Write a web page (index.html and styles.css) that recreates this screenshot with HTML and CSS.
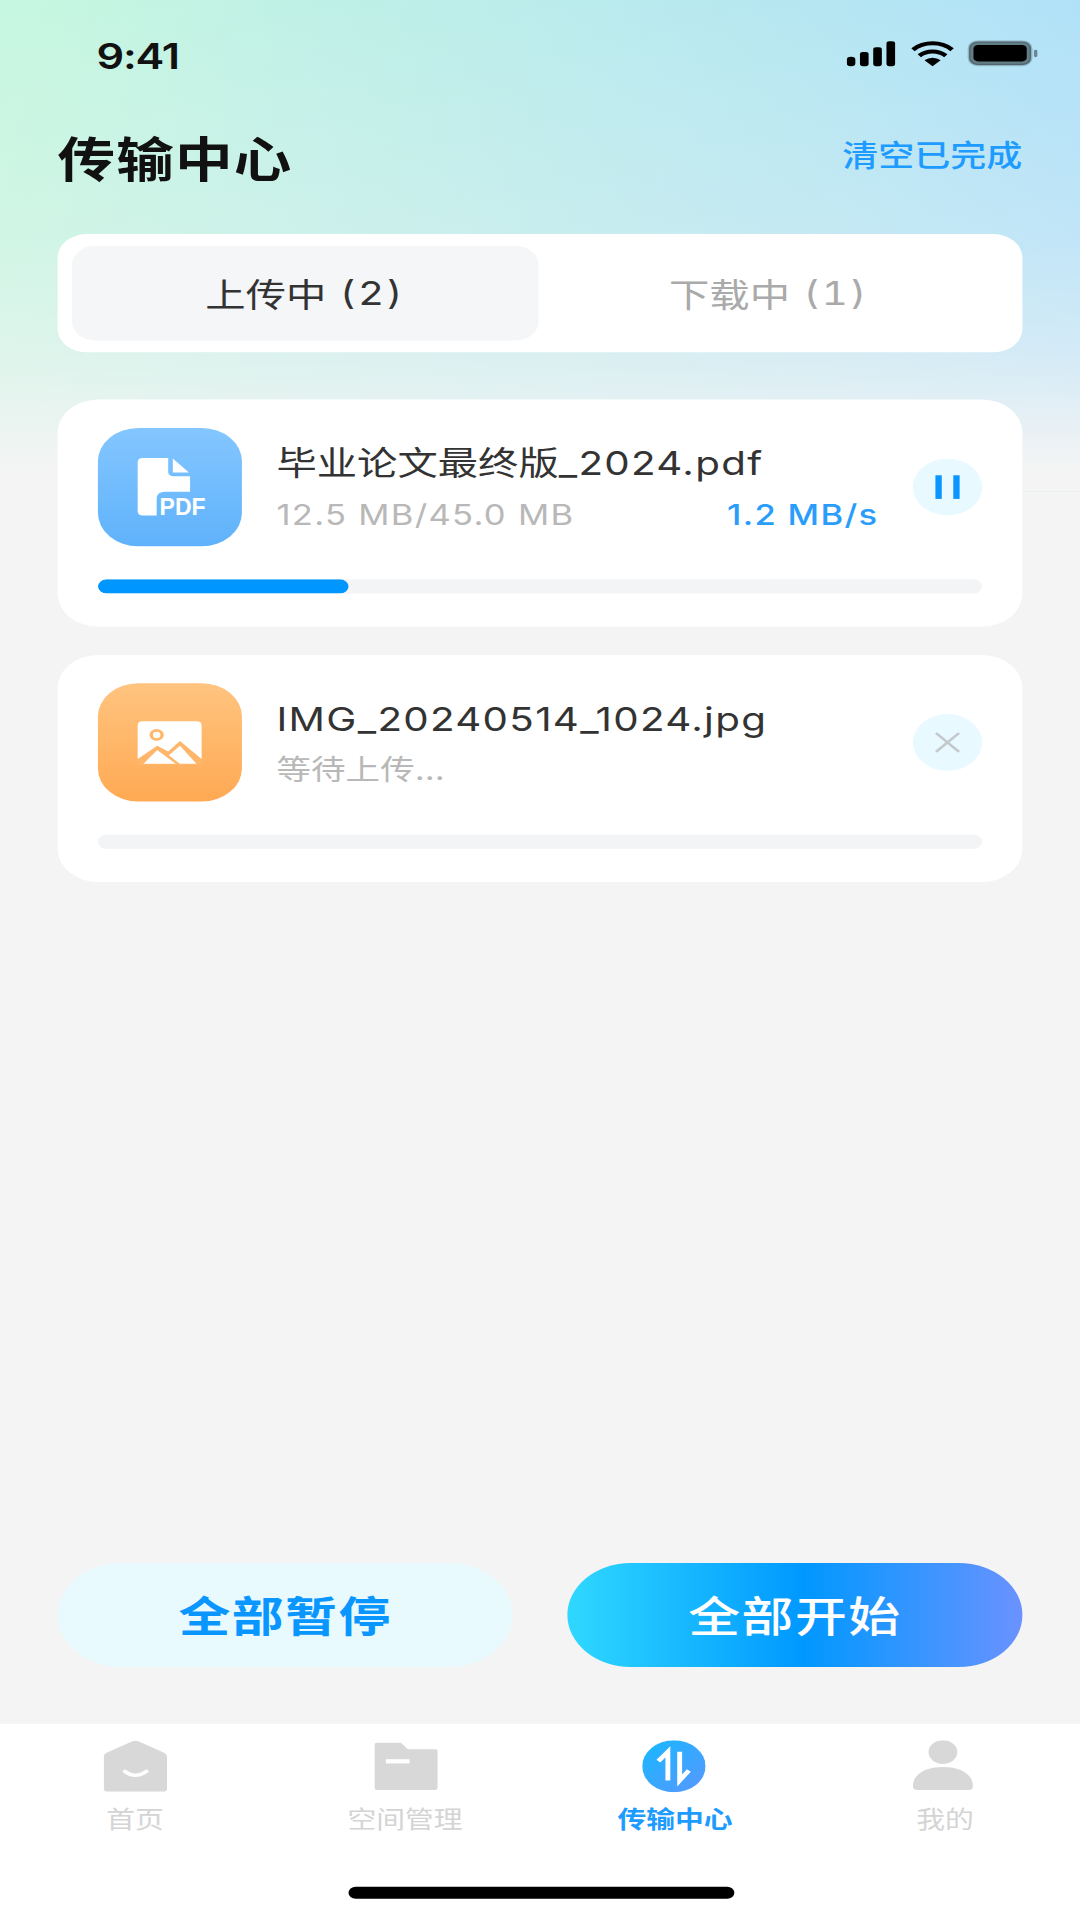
FILE: index.html
```html
<!DOCTYPE html>
<html lang="zh-CN">
<head>
  <meta charset="UTF-8">
  <meta name="viewport" content="width=device-width, initial-scale=1.0">
  <title>传输中心</title>
  <link rel="stylesheet" href="styles.css">
</head>
<body>
<div class="screen">
  <div class="status-bar">
    <span class="clock">9:41</span>
    <svg class="status-icons" width="68" height="12" viewBox="0 0 68 12">
      <rect x="0" y="7" width="3" height="4" rx="1.4"/>
      <rect x="4.6" y="5" width="3" height="6" rx="1"/>
      <rect x="9.2" y="3" width="3" height="8" rx="1"/>
      <rect x="13.8" y="0.4" width="3" height="10.6" rx="1"/>
      <path class="wifi" d="M23 4a10 10 0 0 1 13.600 0M25.200 6.600a6.800 6.800 0 0 1 9.200 0"/>
      <path d="M29.800 11 27 8.500a4.200 4.200 0 0 1 5.600 0z"/>
      <rect class="batt-edge" x="42.5" y="0.5" width="21.500" height="10" rx="3"/>
      <rect x="44" y="2" width="18.500" height="7" rx="1.6"/>
      <rect class="batt-cap" x="65" y="4" width="1.2" height="3.2" rx="0.6"/>
    </svg>
  </div>

  <header class="top">
    <h1>传输中心</h1>
    <a class="clear-link">清空已完成</a>
  </header>

  <div class="tabs">
    <div class="tab active">上传中<span class="count"> (2)</span></div>
    <div class="tab">下载中<span class="count"> (1)</span></div>
  </div>

  <div class="list">
    <div class="file-card">
      <div class="file-row">
        <svg class="file-icon pdf" width="50" height="50" viewBox="0 0 50 50">
          <path class="glyph" d="M15.6 12.7H24.4V18.4Q24.4 20.4 26.4 20.4H32V27H23.4Q20.4 27 20.4 30V37H15.6Q13.8 37 13.8 35.2V14.5Q13.8 12.7 15.6 12.7Z"/>
          <path class="glyph" d="M26 12.9 31.6 18.8H26Z"/>
          <text class="pdf-label" x="21.4" y="37" textLength="16" lengthAdjust="spacingAndGlyphs">PDF</text>
        </svg>
        <div class="file-info">
          <div class="file-name">毕业论文最终版<span class="latin">_2024.pdf</span></div>
          <div class="file-meta">
            <span class="latin">12.5 MB/45.0 MB</span>
            <span class="latin speed">1.2 MB/s</span>
          </div>
        </div>
        <button class="round-btn" aria-label="暂停">
          <svg width="24" height="24" viewBox="0 0 24 24"><rect class="pause" x="7.8" y="7" width="2.2" height="10"/><rect class="pause" x="14" y="7" width="2.2" height="10"/></svg>
        </button>
      </div>
      <div class="track"><div class="fill" style="width: 28.5%"></div></div>
    </div>

    <div class="file-card">
      <div class="file-row">
        <svg class="file-icon img" width="50" height="50" viewBox="0 0 50 50">
          <path class="glyph" d="M15.6 16H34.2Q36 16 36 17.800V32H13.800V17.800Q13.800 16 15.600 16Z"/>
          <circle class="hole" cx="20.4" cy="21.8" r="1.9"/>
          <path class="ridge" d="M13.800 32 20.600 26.400 24.400 28.800 28.500 24.400 36 32V34.500H13.800Z"/>
          <path class="glyph" d="M15.800 34 20.600 28.200 27 34Z"/>
          <path class="glyph" d="M24.600 30.400 28.500 26.400 34.200 34H28.400Z"/>
        </svg>
        <div class="file-info">
          <div class="file-name"><span class="latin">IMG_20240514_1024.jpg</span></div>
          <div class="file-meta"><span>等待上传...</span></div>
        </div>
        <button class="round-btn" aria-label="取消">
          <svg width="24" height="24" viewBox="0 0 24 24"><path class="cross" d="M8 8 16 16M16 8 8 16"/></svg>
        </button>
      </div>
      <div class="track"></div>
    </div>
  </div>

  <div class="actions">
    <button class="action pause-all">全部暂停</button>
    <button class="action start-all">全部开始</button>
  </div>

  <nav class="tabbar">
    <a class="nav-item">
      <svg width="22" height="22" viewBox="0 0 22 22">
        <path class="nav-fill" d="M10 .4Q11 0 12 .4L21 5.3Q22 5.9 22 7V20.4Q22 21.7 20.7 21.7H1.3Q0 21.7 0 20.4V7Q0 5.9 1 5.3Z"/>
        <path class="nav-cut" d="M7.4 13.2Q11 16.4 14.8 13.2"/>
      </svg>
      <span>首页</span>
    </a>
    <a class="nav-item">
      <svg width="22" height="22" viewBox="0 0 22 22">
        <path class="nav-fill" d="M1 1H9.2L11.6 3.8H21Q22 3.8 22 4.8V20Q22 21 21 21H1Q0 21 0 20V2Q0 1 1 1Z"/>
        <rect class="nav-hole" x="4" y="8" width="8.2" height="1.8"/>
      </svg>
      <span>空间管理</span>
    </a>
    <a class="nav-item current">
      <svg width="22" height="22" viewBox="0 0 22 22">
        <defs>
          <linearGradient id="navBlue" x1="0" y1="0" x2="1" y2="1">
            <stop offset="0" stop-color="#15b9ff"/>
            <stop offset="1" stop-color="#5a96ff"/>
          </linearGradient>
        </defs>
        <circle cx="11" cy="11" r="11" fill="url(#navBlue)"/>
        <path class="nav-arrow" d="M5.6 8.8 8.9 4.9V17M13 4.9V17L16.2 12.8"/>
      </svg>
      <span>传输中心</span>
    </a>
    <a class="nav-item">
      <svg width="22" height="22" viewBox="0 0 22 22">
        <circle class="nav-fill" cx="10.400" cy="5" r="5"/>
        <path class="nav-fill" d="M0 19.4C0 14.2 4.400 11.300 10.400 11.300S20.800 14.200 20.800 19.400Q20.800 21 19.300 21H1.500Q0 21 0 19.400Z"/>
      </svg>
      <span>我的</span>
    </a>
    <div class="home-bar"></div>
  </nav>
</div>
</body>
</html>
```

FILE: styles.css
```css
html, body {
  margin: 0;
  width: 1080px;
  height: 1920px;
  overflow: hidden;
  background: #f4f4f4;
}

/* drawn at 375x812 and stretched up to the window */
.screen {
  width: 375px;
  height: 812px;
  display: flex;
  flex-direction: column;
  transform: scale(2.88, 2.3645);
  transform-origin: 0 0;
  font-family: Inter, "Noto Sans CJK SC", sans-serif;
  color: #222;
  background:
    linear-gradient(180deg, rgba(244, 244, 244, 0) 0, rgba(244, 244, 244, 0.25) 99px, rgba(244, 244, 244, 0.52) 148px, #f4f4f4 200px) no-repeat,
    linear-gradient(100deg, #c6f7df 0, #aedffa 100%) no-repeat;
  background-size: 100% 208px;
  background-color: #f4f4f4;
}

.status-bar {
  height: 44px;
  flex: none;
  position: relative;
}
.clock {
  position: absolute;
  left: 33.500px;
  top: 14.500px;
  font-size: 15px;
  line-height: 17px;
  font-weight: 600;
  letter-spacing: -0.400px;
  color: #111;
}
.status-icons {
  position: absolute;
  left: 294px;
  top: 17.400px;
  fill: #000;
}
.wifi {
  fill: none;
  stroke: #000;
  stroke-width: 1.700;
}
.batt-edge {
  fill: rgba(0, 0, 0, 0.45);
  stroke: rgba(0, 0, 0, 0.2);
  stroke-width: 1;
}
.batt-cap {
  fill: rgba(0, 0, 0, 0.4);
}

.top {
  height: 44px;
  margin: 0 20px 11px;
  flex: none;
  display: flex;
  align-items: center;
  justify-content: space-between;
}
.top h1 {
  margin: 0;
  font-size: 20px;
  font-weight: 700;
  letter-spacing: 0.400px;
  color: #111;
}
.clear-link {
  margin-bottom: 3px;
  font-size: 12.500px;
  font-weight: 500;
  color: #1e9bff;
}

.tabs {
  flex: none;
  height: 50px;
  box-sizing: border-box;
  margin: 0 20px 20px;
  padding: 5px;
  display: flex;
  background: white;
  border-radius: 10px;
}
.tab {
  flex: 1;
  display: flex;
  align-items: center;
  justify-content: center;
  padding-bottom: 1px;
  padding-right: 3px;
  font-size: 14px;
  color: #aaa;
  border-radius: 8px;
}
.tab.active {
  flex: none;
  width: 162px;
  box-sizing: border-box;
  padding-right: 0;
  color: #333;
  background: #f5f6f8;
}
.count {
  white-space: pre;
  letter-spacing: 0.900px;
  font-variant-numeric: tabular-nums;
}

.list {
  flex: none;
  margin: 0 20px;
  display: flex;
  flex-direction: column;
  gap: 12px;
}
.file-card {
  height: 96px;
  box-sizing: border-box;
  padding: 12px 14px 14px;
  background: white;
  border-radius: 14px;
}
.file-row {
  display: flex;
  align-items: center;
  gap: 12px;
  margin-bottom: 14px;
}
.file-icon {
  flex: none;
  display: block;
  border-radius: 14px;
}
.file-icon.pdf {
  background: linear-gradient(180deg, #84c6ff, #5fb2fb);
}
.file-icon.img {
  background: linear-gradient(180deg, #ffc47f, #ffa953);
}
.glyph {
  fill: white;
}
.hole {
  fill: white;
  stroke: #ffb76a;
  stroke-width: 1.200;
}
.ridge {
  fill: #ffb56a;
}
.pdf-label {
  font-family: "Liberation Sans", sans-serif;
  font-size: 10px;
  font-weight: 700;
  fill: white;
}
.file-info {
  flex: 1;
  min-width: 0;
}
.file-name {
  font-size: 14px;
  line-height: 20px;
  color: #333;
  white-space: nowrap;
}
.latin {
  letter-spacing: 0.450px;
}
.file-meta {
  margin-top: 3px;
  display: flex;
  justify-content: space-between;
  font-size: 12px;
  line-height: 18px;
  color: #b8b8b8;
}
.speed {
  color: #2a9dfa;
  font-weight: 500;
}
.round-btn {
  flex: none;
  width: 24px;
  height: 24px;
  padding: 0;
  border: none;
  border-radius: 50%;
  background: #e8f9ff;
}
.round-btn svg {
  display: block;
}
.pause {
  fill: #0a96ff;
}
.cross {
  fill: none;
  stroke: #c4c8cc;
  stroke-width: 1;
}
.track {
  height: 6px;
  border-radius: 3px;
  background: #f3f4f5;
  overflow: hidden;
}
.fill {
  height: 100%;
  border-radius: 3px;
  background: #0096ff;
}

.actions {
  margin: auto 20px 24px;
  flex: none;
  display: flex;
  gap: 19px;
}
.action {
  flex: 1;
  height: 44px;
  padding: 0 0 2px;
  border: none;
  border-radius: 22px;
  font-family: inherit;
  font-size: 18px;
  font-weight: 500;
  letter-spacing: 0.500px;
}
.pause-all {
  color: #0a96ff;
  background: #e9faff;
  font-weight: 700;
}
.start-all {
  color: white;
  background: linear-gradient(90deg, #2fd8ff 0, #0098ff 52%, #6a92ff 100%);
}

.tabbar {
  height: 83px;
  flex: none;
  position: relative;
  display: grid;
  grid-template-columns: repeat(4, 1fr);
  background: white;
}
.nav-item {
  display: flex;
  flex-direction: column;
  align-items: center;
  padding-top: 7px;
  font-size: 10px;
  line-height: 14px;
  color: #d4d4d4;
}
.nav-item svg {
  display: block;
  margin-bottom: 3.500px;
}
.nav-item.current {
  color: #1e9bff;
  font-weight: 700;
}
.nav-fill {
  fill: #d8d8d8;
}
.nav-cut {
  fill: none;
  stroke: white;
  stroke-width: 1.500;
  stroke-linecap: round;
}
.nav-hole {
  fill: white;
}
.nav-arrow {
  fill: none;
  stroke: white;
  stroke-width: 1.700;
}
.home-bar {
  position: absolute;
  left: 120.500px;
  bottom: 9px;
  width: 134px;
  height: 5px;
  border-radius: 3px;
  background: black;
}
```
